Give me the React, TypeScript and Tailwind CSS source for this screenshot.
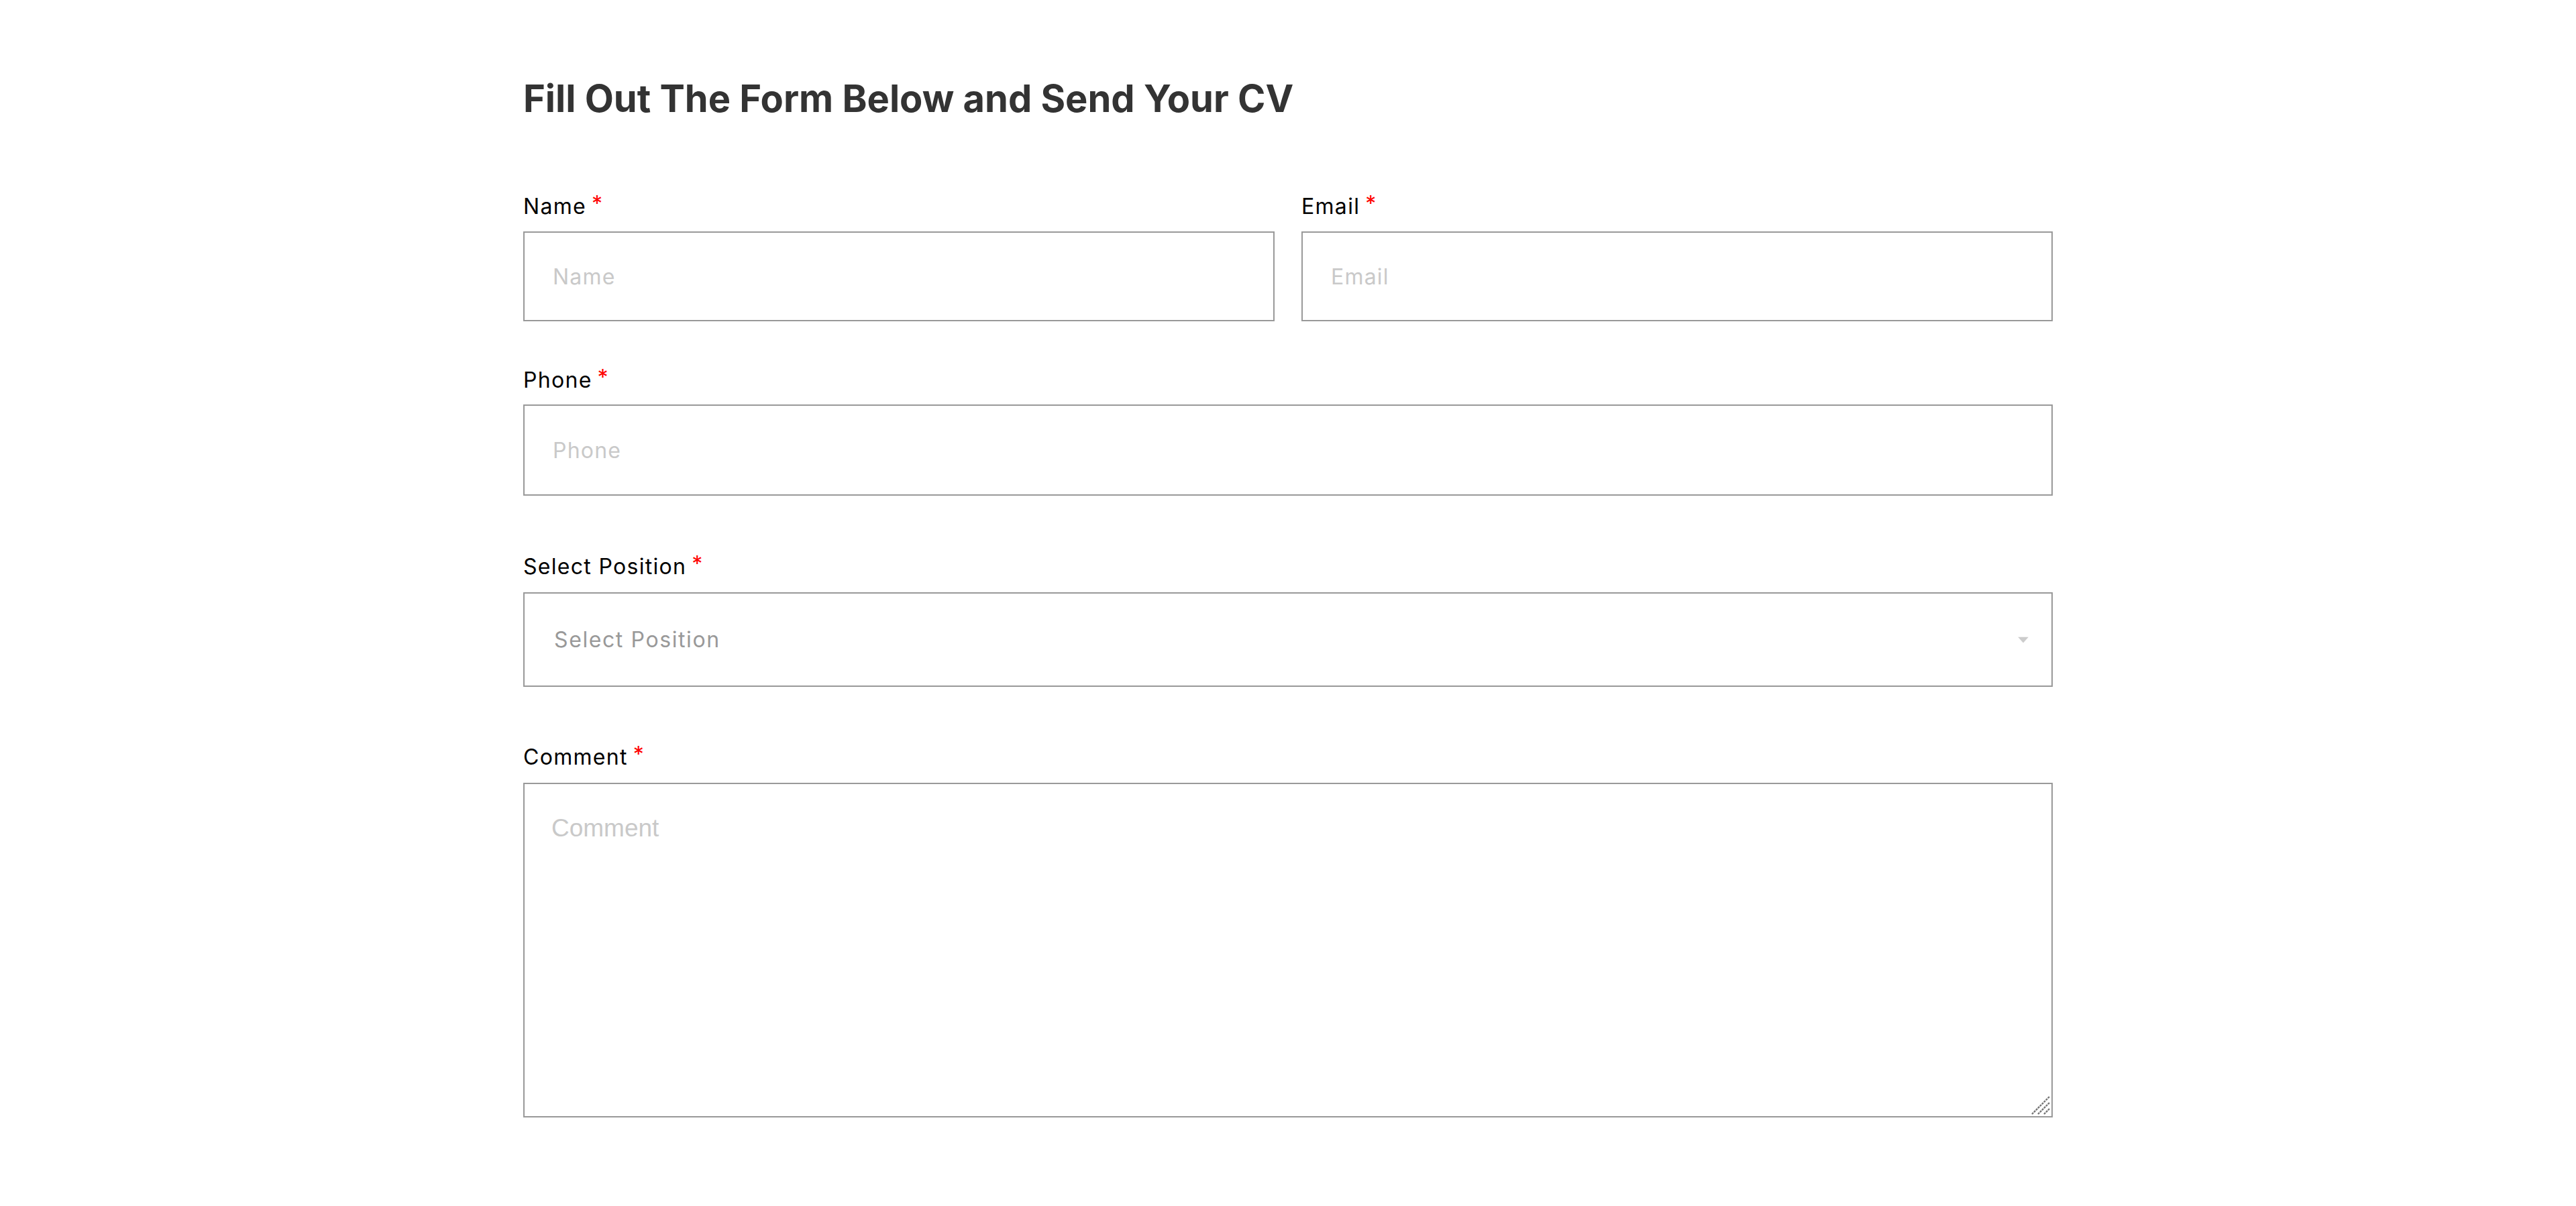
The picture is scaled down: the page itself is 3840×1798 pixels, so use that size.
import React from "react";

function Label({ text }: { text: string }) {
  return (
    <label className="block text-[32px] leading-[40px] tracking-[1.3px] text-black font-['Inter','Noto_Sans',sans-serif]">
      {text}
      <span className="ml-[8px] text-[#ff0000] text-[32px] leading-[32px] align-top">*</span>
    </label>
  );
}

const inputCls =
  "block w-full h-[134px] border-2 border-[#999999] px-[42px] text-[32px] tracking-[1.2px] text-black placeholder:text-[#c9c9c9] font-['Inter',sans-serif] outline-none";

export default function App() {
  return (
    <div className="min-h-screen bg-white">
      <div className="mx-auto w-[2280px] pt-[114px] pb-[120px]">
        <h2 className="text-[56px] leading-[67px] font-bold text-[#333333] font-['Inter',sans-serif]">
          Fill Out The Form Below and Send Your CV
        </h2>

        <div className="mt-[107px] grid grid-cols-2 gap-x-[40px]">
          <div>
            <Label text="Name" />
            <input placeholder="Name" className={"mt-[17px] " + inputCls} />
          </div>
          <div>
            <Label text="Email" />
            <input placeholder="Email" className={"mt-[17px] " + inputCls} />
          </div>
        </div>

        <div className="mt-[68px]">
          <Label text="Phone" />
          <input placeholder="Phone" className={"mt-[16px] " + inputCls + " h-[136px]"} />
        </div>

        <div className="mt-[86px]">
          <Label text="Select Position" />
          <div className="relative mt-[18px]">
            <select
              defaultValue=""
              className="block w-full h-[141px] appearance-none border-2 border-[#999999] bg-white px-[44px] text-[32px] tracking-[1.6px] text-[#999999] font-['Inter',sans-serif] outline-none"
            >
              <option value="" disabled>
                Select Position
              </option>
              <option>Developer</option>
              <option>Designer</option>
            </select>
            <svg
              className="pointer-events-none absolute right-[36px] top-1/2 -translate-y-1/2"
              width="16"
              height="9"
              viewBox="0 0 16 9"
            >
              <polygon points="0,0 16,0 8,9" fill="#cccccc" />
            </svg>
          </div>
        </div>

        <div className="mt-[85px]">
          <Label text="Comment" />
          <div className="relative mt-[18px]">
            <textarea
              placeholder="Comment"
              className="block w-full h-[499px] resize-none border-2 border-[#999999] px-[40px] pt-[38px] text-[37px] text-black placeholder:text-[#c9c9c9] font-['Liberation_Sans',Arial,sans-serif] outline-none"
            />
            <svg
              className="pointer-events-none absolute right-[4px] bottom-[4px]"
              width="30"
              height="30"
              viewBox="0 0 30 30"
            >
              <g stroke="#777777" strokeWidth="2.4" strokeLinecap="butt" strokeDasharray="3 1.2">
                <line x1="3" y1="29" x2="29" y2="3" />
                <line x1="12" y1="29" x2="29" y2="12" />
                <line x1="21" y1="29" x2="29" y2="21" />
              </g>
            </svg>
          </div>
        </div>
      </div>
    </div>
  );
}
